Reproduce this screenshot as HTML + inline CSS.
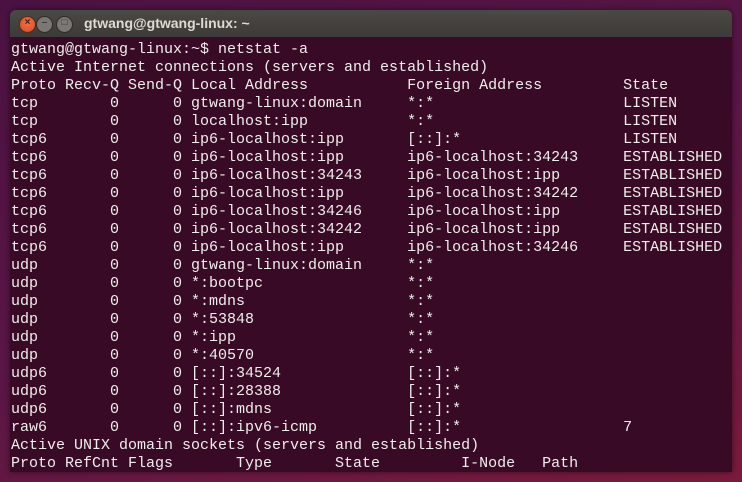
<!DOCTYPE html>
<html><head><meta charset="utf-8"><style>
html,body{margin:0;padding:0;width:742px;height:482px;overflow:hidden;}
body{background:linear-gradient(160deg,#4a1242 0%,#5a1646 50%,#7a1a3c 100%);position:relative;}
.win{position:absolute;left:10px;top:10px;width:722px;height:462px;border-radius:6px 6px 0 0;overflow:hidden;box-shadow:0 0 6px rgba(0,0,0,.5);}
.tb{height:27px;background:linear-gradient(#4a4944,#3c3b37);position:relative;}
.tb .t{position:absolute;left:74px;top:5px;font:bold 14px "Liberation Sans",sans-serif;color:#dfdbd2;}
.btn{position:absolute;top:6px;width:15px;height:15px;border-radius:50%;}
.b1{left:9px;background:radial-gradient(circle at 50% 40%,#f0724a,#d9481b);border:1px solid #5a2a1a;}
.b2{left:26px;background:#7a7873;border:1px solid #2e2d2a;}
.b3{left:46px;background:#7a7873;border:1px solid #2e2d2a;}
.btn span{position:absolute;left:0;top:0;width:15px;height:15px;line-height:15px;text-align:center;color:#3c3b37;font:bold 10px "Liberation Sans",sans-serif;}
.body{position:absolute;top:27px;left:0;right:0;bottom:0;background:#380a26;}
pre{margin:0;position:absolute;left:1px;top:4px;font:15px/18px "Liberation Mono",monospace;color:#eeeeec;}
</style></head><body>
<div class="win">
<div class="tb">
<div class="btn b1"><span style="color:#4a1a0a">×</span></div>
<div class="btn b2"><span>–</span></div>
<div class="btn b3"><span>□</span></div>
<div class="t">gtwang@gtwang-linux: ~</div>
</div>
<div class="body"><pre>gtwang@gtwang-linux:~$ netstat -a
Active Internet connections (servers and established)
Proto Recv-Q Send-Q Local Address           Foreign Address         State
tcp        0      0 gtwang-linux:domain     *:*                     LISTEN
tcp        0      0 localhost:ipp           *:*                     LISTEN
tcp6       0      0 ip6-localhost:ipp       [::]:*                  LISTEN
tcp6       0      0 ip6-localhost:ipp       ip6-localhost:34243     ESTABLISHED
tcp6       0      0 ip6-localhost:34243     ip6-localhost:ipp       ESTABLISHED
tcp6       0      0 ip6-localhost:ipp       ip6-localhost:34242     ESTABLISHED
tcp6       0      0 ip6-localhost:34246     ip6-localhost:ipp       ESTABLISHED
tcp6       0      0 ip6-localhost:34242     ip6-localhost:ipp       ESTABLISHED
tcp6       0      0 ip6-localhost:ipp       ip6-localhost:34246     ESTABLISHED
udp        0      0 gtwang-linux:domain     *:*
udp        0      0 *:bootpc                *:*
udp        0      0 *:mdns                  *:*
udp        0      0 *:53848                 *:*
udp        0      0 *:ipp                   *:*
udp        0      0 *:40570                 *:*
udp6       0      0 [::]:34524              [::]:*
udp6       0      0 [::]:28388              [::]:*
udp6       0      0 [::]:mdns               [::]:*
raw6       0      0 [::]:ipv6-icmp          [::]:*                  7
Active UNIX domain sockets (servers and established)
Proto RefCnt Flags       Type       State         I-Node   Path</pre></div>
</div>
</body></html>
